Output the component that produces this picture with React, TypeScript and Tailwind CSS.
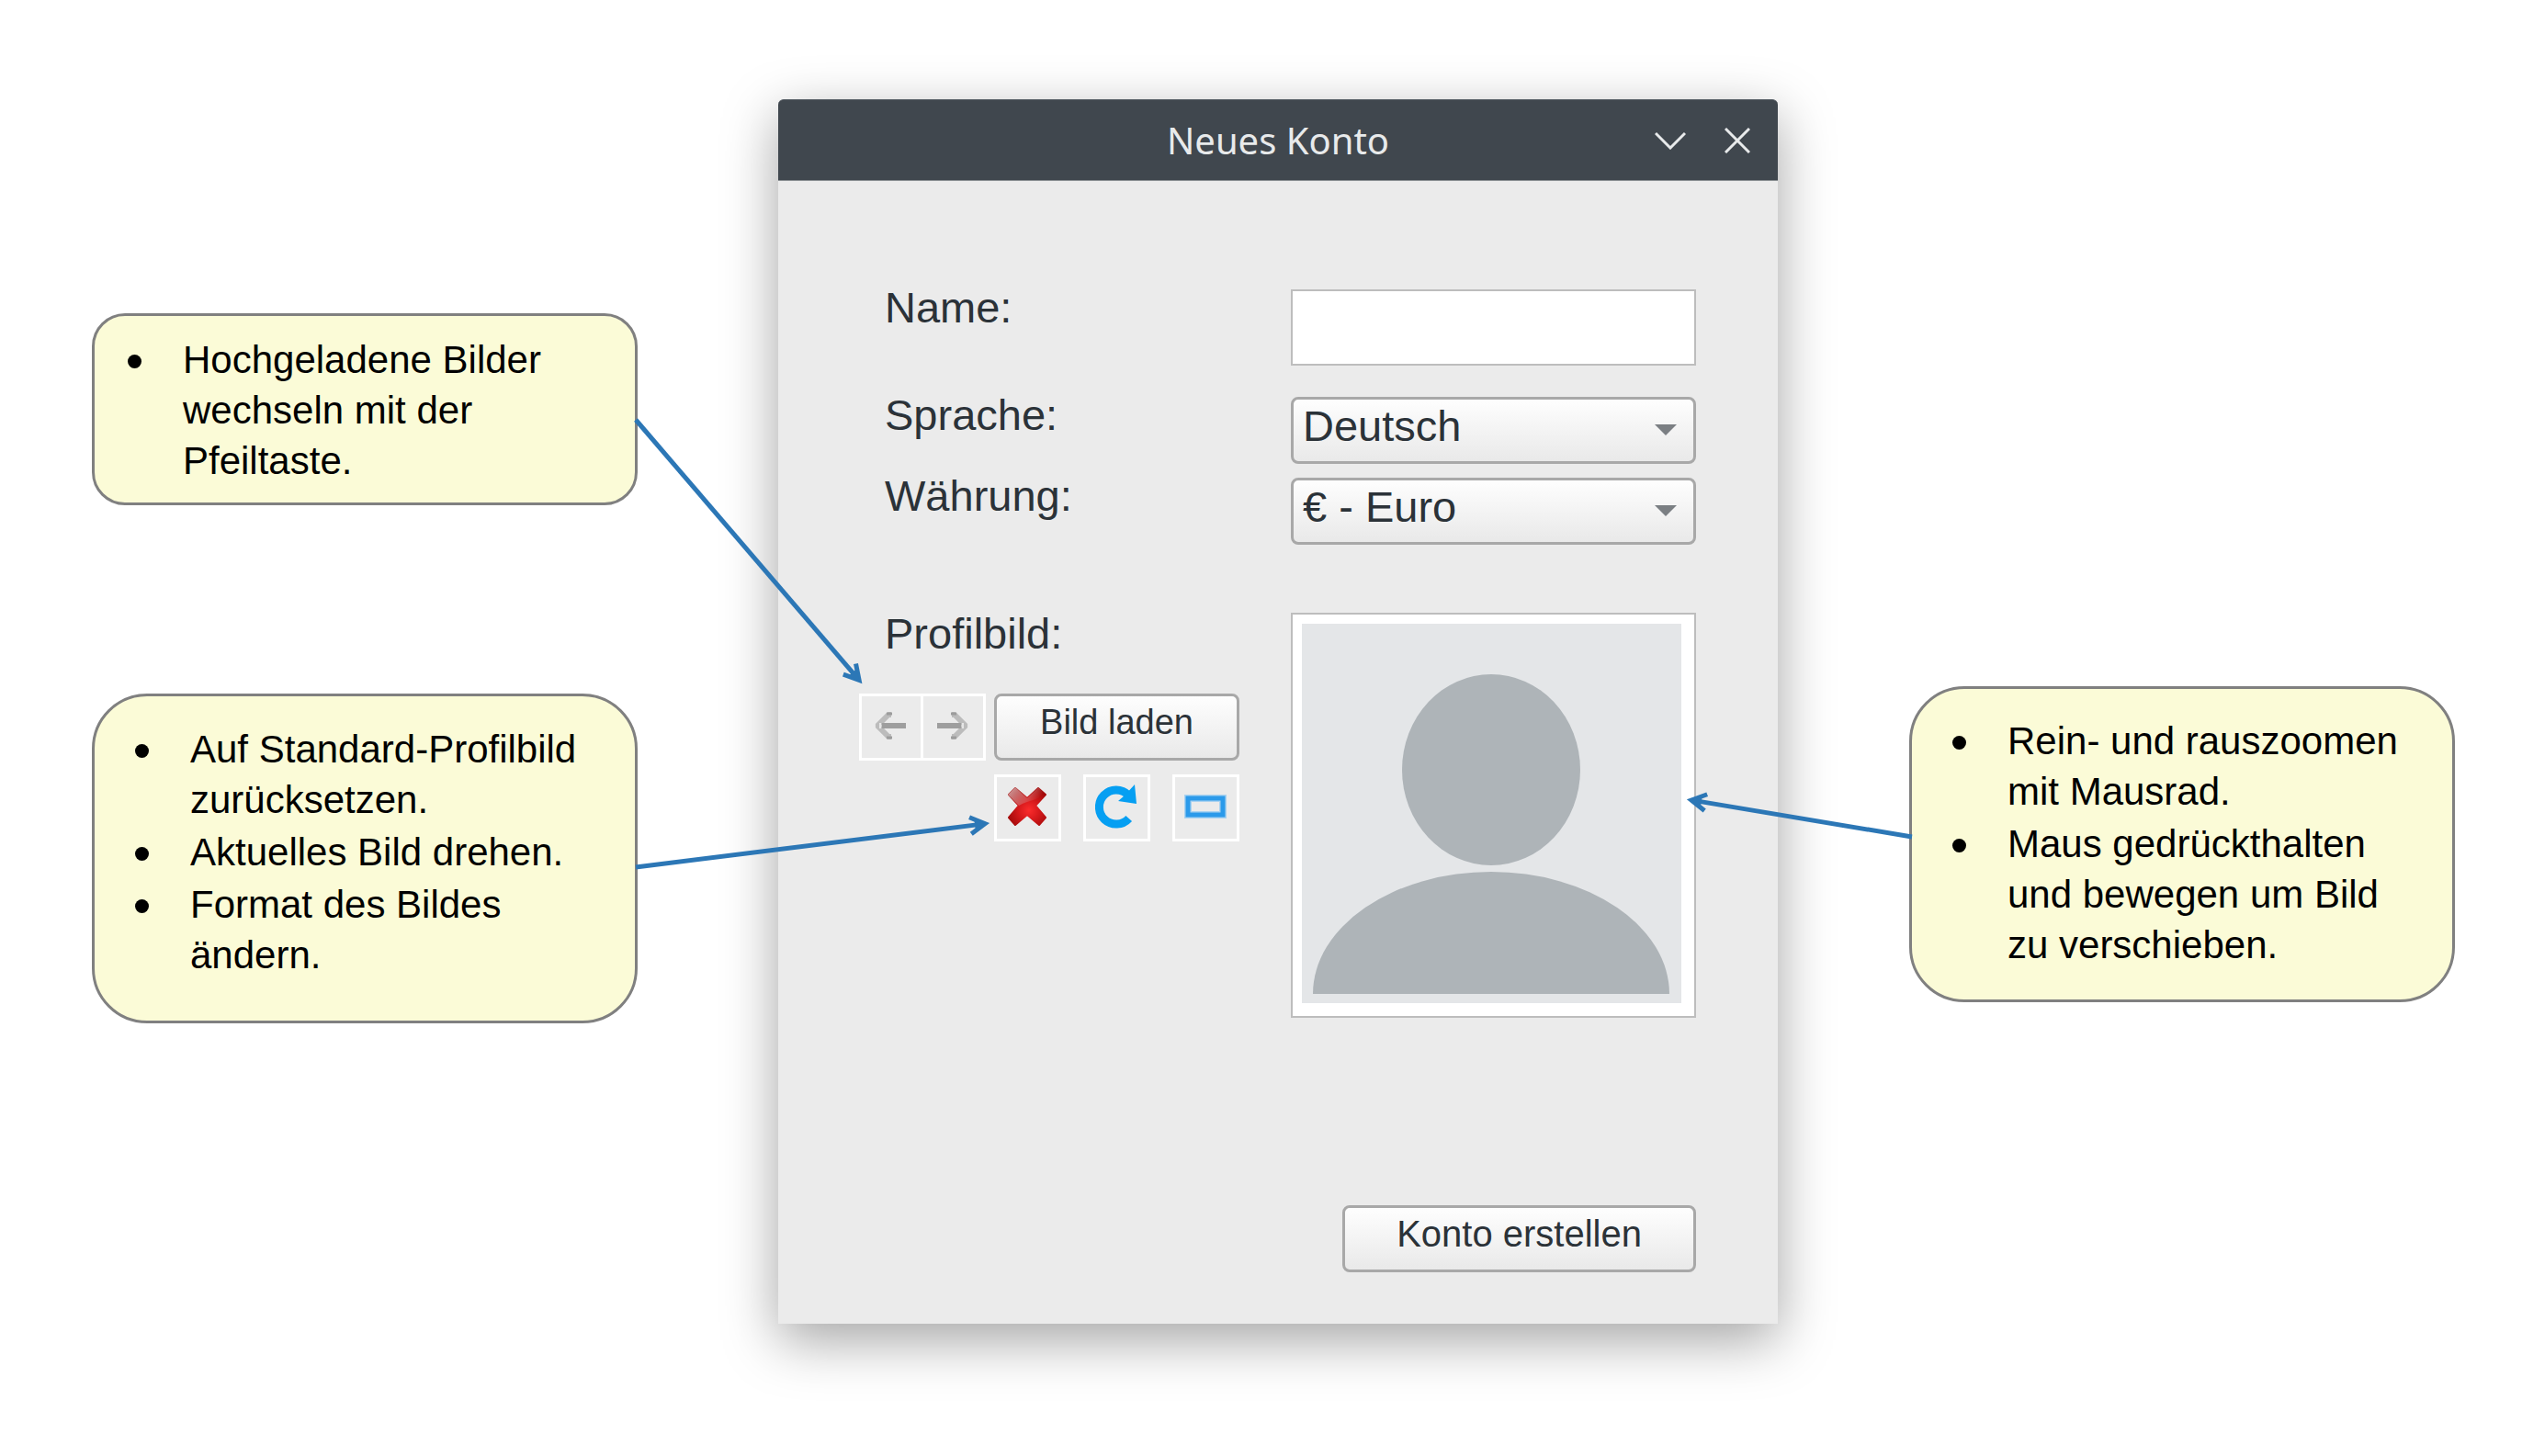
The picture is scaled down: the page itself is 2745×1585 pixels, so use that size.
import type { ReactNode } from "react";
import clsx from "clsx";

function Callout({ items, className }: { items: string[]; className: string }) {
  return (
    <ul
      className={clsx(
        "flex flex-col gap-[2px] border-3 border-[#808080] bg-[#fbfbd7] pr-10 text-[42px] leading-[55px] text-black",
        className,
      )}
    >
      {items.map((item) => (
        <li key={item} className="flex gap-[45px]">
          <span className="mt-[22px] size-[15px] shrink-0 rounded-full bg-black" />
          <span>{item}</span>
        </li>
      ))}
    </ul>
  );
}

function Field({ id, label, children }: { id: string; label: string; children: ReactNode }) {
  return (
    <div className="grid grid-cols-[470fr_441fr] items-start">
      <label htmlFor={id} className="pl-7 text-[47px] leading-10">
        {label}
      </label>
      {children}
    </div>
  );
}

function Dropdown({ id, value }: { id: string; value: string }) {
  return (
    <div className="relative">
      <select
        id={id}
        defaultValue={value}
        className="block h-[73px] w-full appearance-none rounded-lg border-3 border-[#a8a8a8] bg-linear-to-b from-[#fefefe] to-[#e9e9e9] pr-14 pb-[10px] pl-[10px] text-[47px] leading-[57px]"
      >
        <option>{value}</option>
      </select>
      <svg viewBox="0 0 24 12" className="pointer-events-none absolute top-[30px] right-[21px] h-3 w-6" aria-hidden="true">
        <path d="M0 0H24L12 12Z" fill="#7b7f83" />
      </svg>
    </div>
  );
}

function ToolButton({ label, className, children }: { label: string; className?: string; children: ReactNode }) {
  return (
    <button
      type="button"
      aria-label={label}
      className={clsx("flex h-[73px] items-center justify-center border-3 border-white pr-[2px] pb-[3px]", className)}
    >
      {children}
    </button>
  );
}

function ArrowIcon({ flipped }: { flipped?: boolean }) {
  return (
    <svg viewBox="0 0 36 30" className={clsx("h-[30px] w-9", flipped && "-scale-x-100")} fill="none" aria-hidden="true">
      <path d="M19 3H16L4 15L16 27H19" stroke="#bcbcbc" strokeWidth="6" strokeLinejoin="bevel" />
      <path d="M14 2H20M14 28H20" stroke="#9c9c9c" strokeWidth="3" />
      <path d="M7 12V18" stroke="#e6e6e6" strokeWidth="2" />
      <path d="M9 15H35" stroke="#9e9e9e" strokeWidth="6" />
    </svg>
  );
}

function DeleteIcon() {
  return (
    <svg viewBox="0 0 42 42" className="size-[42px]" fill="none" aria-hidden="true">
      <defs>
        <radialGradient id="red" gradientUnits="userSpaceOnUse" cx="23" cy="25" r="24">
          <stop offset="0" stopColor="#fb2c2c" />
          <stop offset="0.4" stopColor="#dc1c1e" />
          <stop offset="1" stopColor="#a30a0a" />
        </radialGradient>
        <linearGradient id="gloss" gradientUnits="userSpaceOnUse" x1="4" y1="4" x2="26" y2="22">
          <stop offset="0" stopColor="#d8b4b4" stopOpacity="0.75" />
          <stop offset="0.65" stopColor="#d89090" stopOpacity="0.4" />
          <stop offset="1" stopColor="#d89090" stopOpacity="0" />
        </linearGradient>
      </defs>
      <path
        d="M8 1L21 12L33 1L41 8L30 20L41 33L34 41L21 30L8 41L1 33L12 20L1 8Z"
        fill="url(#red)"
        stroke="url(#red)"
        strokeWidth="2"
        strokeLinejoin="round"
      />
      <path d="M8 0L21 12L33 0L40 7C32 15 24 13 12 20L0 8Z" fill="url(#gloss)" />
    </svg>
  );
}

function RotateIcon() {
  return (
    <svg viewBox="0 0 46 48" className="h-12 w-[46px]" fill="none" aria-hidden="true">
      <path d="M36 11.5A18.5 18.5 0 1 0 36.7 36.9" stroke="#069ff2" strokeWidth="9" />
      <path d="M43 0L45 21L25 18L32 12Z" fill="#069ff2" />
    </svg>
  );
}

function FormatIcon() {
  return (
    <svg viewBox="0 0 46 26" className="h-[26px] w-[46px]" fill="none" aria-hidden="true">
      <rect x="4" y="4" width="38" height="18" stroke="#a9d2f0" strokeWidth="8" />
      <rect x="4" y="4" width="38" height="18" stroke="#2b9aea" strokeWidth="5" />
    </svg>
  );
}

function Avatar() {
  return (
    <div className="border-2 border-[#bdbdbd] bg-white pt-[10px] pr-[14px] pb-[14px] pl-[10px]">
      <svg viewBox="0 0 413 413" className="block w-full bg-[#e4e6e8]" role="img" aria-label="Profilbild Vorschau">
        <ellipse cx="206" cy="159" rx="97" ry="104" fill="#aeb4b8" />
        <path d="M12 403A194 133 0 0 1 400 403Z" fill="#aeb4b8" />
      </svg>
    </div>
  );
}

function Pointer({ from, to }: { from: [number, number]; to: [number, number] }) {
  const angle = (Math.atan2(to[1] - from[1], to[0] - from[0]) * 180) / Math.PI;
  const length = Math.hypot(to[0] - from[0], to[1] - from[1]);
  return (
    <g transform={`translate(${to[0]} ${to[1]}) rotate(${angle})`} fill="none" stroke="#2c77b6" strokeWidth="5">
      <path d={`M${-length} 0H-7`} />
      <path d="M-22 -9L-6 0L-22 9" />
      <path d="M-17 -5L-6 0L-17 5Z" fill="#2c77b6" stroke="none" />
    </g>
  );
}

const raised = "h-[73px] rounded-lg border-3 border-[#a8a8a8] bg-linear-to-b from-[#fefefe] to-[#e9e9e9]";

export default function App() {
  return (
    <div className="relative bg-white font-['Liberation_Sans',Arial,sans-serif]">
      <main className="grid grid-cols-[594fr_153fr_1088fr_143fr_594fr] items-start pt-[108px] pr-[73px] pb-36 pl-[100px]">
        <div className="flex flex-col gap-[205px] pt-[233px]">
          <Callout
            className="rounded-[36px] pt-5 pb-[18px] pl-9"
            items={["Hochgeladene Bilder wechseln mit der Pfeiltaste."]}
          />
          <Callout
            className="rounded-[60px] pt-[30px] pb-11 pl-11"
            items={["Auf Standard-Profilbild zurücksetzen.", "Aktuelles Bild drehen.", "Format des Bildes ändern."]}
          />
        </div>

        <section className="col-start-3 rounded-t-md bg-[#ebebeb] text-[#2b3238] shadow-[0_18px_60px_rgba(0,0,0,0.36)]">
          <header className="grid h-[89px] grid-cols-[1fr_auto_1fr] items-center rounded-t-md border-t border-b border-t-[#586067] border-b-[#8b9093] bg-[#40474e] px-[30px] text-[#e8eaeb]">
            <h1 className="col-start-2 font-['Noto_Sans',sans-serif] text-[40px] leading-[54px]">Neues Konto</h1>
            <div className="flex items-center justify-end gap-[42px]">
              <button type="button" aria-label="Minimieren">
                <svg viewBox="0 0 34 20" className="h-5 w-[34px]" fill="none" stroke="#e8eaeb" strokeWidth="3" aria-hidden="true">
                  <path d="M1 2L17 18L33 2" />
                </svg>
              </button>
              <button type="button" aria-label="Schließen">
                <svg viewBox="0 0 28 28" className="size-7" fill="none" stroke="#e8eaeb" strokeWidth="3" aria-hidden="true">
                  <path d="M1 1L27 27M27 1L1 27" />
                </svg>
              </button>
            </div>
          </header>

          <form className="flex flex-col pt-[118px] pr-[89px] pb-14 pl-[88px]" onSubmit={(e) => e.preventDefault()}>
            <Field id="name" label="Name:">
              <input id="name" type="text" className="h-[83px] w-full border-2 border-[#bdbdbd] bg-white px-3 text-[47px]" />
            </Field>
            <div className="mt-[34px] flex flex-col gap-[15px]">
              <Field id="sprache" label="Sprache:">
                <Dropdown id="sprache" value="Deutsch" />
              </Field>
              <Field id="waehrung" label="Währung:">
                <Dropdown id="waehrung" value="€ - Euro" />
              </Field>
            </div>

            <div className="mt-[74px] grid grid-cols-[470fr_441fr] items-start">
              <div className="pt-[3px] pr-14">
                <h2 className="pl-7 text-[47px] leading-10">Profilbild:</h2>
                <div className="mt-[45px] flex">
                  <ToolButton label="Vorheriges Bild" className="w-[70px]">
                    <ArrowIcon />
                  </ToolButton>
                  <ToolButton label="Nächstes Bild" className="-ml-[3px] w-[71px]">
                    <ArrowIcon flipped />
                  </ToolButton>
                  <button type="button" className={clsx(raised, "ml-[9px] flex-1 pb-[11px] text-[38px] leading-none")}>
                    Bild laden
                  </button>
                </div>
                <div className="mt-[15px] flex justify-end gap-6">
                  <ToolButton label="Zurücksetzen" className="w-[73px]">
                    <DeleteIcon />
                  </ToolButton>
                  <ToolButton label="Drehen" className="w-[73px]">
                    <RotateIcon />
                  </ToolButton>
                  <ToolButton label="Format ändern" className="w-[73px]">
                    <FormatIcon />
                  </ToolButton>
                </div>
              </div>
              <Avatar />
            </div>

            <button type="submit" className={clsx(raised, "mt-[204px] self-end px-14 pb-[11px] text-[40px] leading-none")}>
              Konto erstellen
            </button>
          </form>
        </section>

        <div className="col-start-5 pt-[639px]">
          <Callout
            className="rounded-[60px] pt-[29px] pb-[32px] pl-11"
            items={["Rein- und rauszoomen mit Mausrad.", "Maus gedrückthalten und bewegen um Bild zu verschieben."]}
          />
        </div>
      </main>

      <svg
        viewBox="0 0 2745 1585"
        preserveAspectRatio="none"
        className="pointer-events-none absolute inset-0 h-full w-full"
        aria-hidden="true"
      >
        <Pointer from={[692, 457]} to={[939, 745]} />
        <Pointer from={[692, 944]} to={[1078, 896]} />
        <Pointer from={[2081, 911]} to={[1835, 870]} />
      </svg>
    </div>
  );
}
